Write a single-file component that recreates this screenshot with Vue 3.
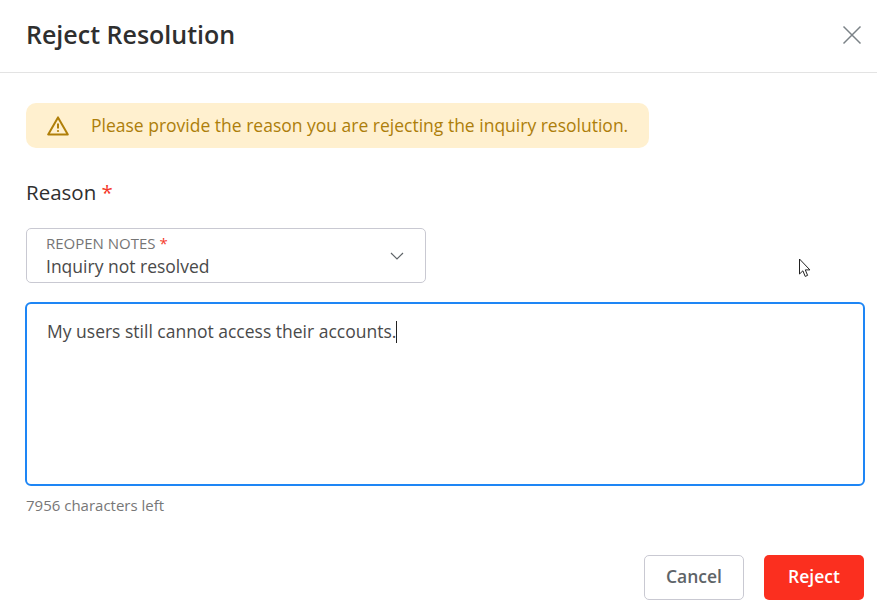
<script setup>
const remaining = 7956
</script>

<template>
  <div class="dialog">
    <header class="head">
      <h1 class="title">Reject Resolution</h1>
      <svg class="close" width="20" height="20" viewBox="0 0 20 20" fill="none" stroke="#7b8287" stroke-width="1.5">
        <path d="M1.5 1.5 18.5 18.5M18.5 1.5 1.5 18.5" />
      </svg>
    </header>
    <main class="body">
      <div class="alert">
        <svg class="warn" width="22" height="20" viewBox="0 0 22 20" fill="none" stroke="#b07f09" stroke-width="2" stroke-linejoin="round">
          <path d="M11 1.4 1.2 18.4h19.6z" />
          <path d="M11 7.5v5" stroke-width="2" />
          <circle cx="11" cy="15" r="1.1" fill="#b07f09" stroke="none" />
        </svg>
        <span class="alert-text">Please provide the reason you are rejecting the inquiry resolution.</span>
      </div>
      <div class="label">Reason <span class="req">*</span></div>
      <div class="select">
        <div class="select-text">
          <div class="select-label">REOPEN NOTES <span class="req">*</span></div>
          <div class="select-value">Inquiry not resolved</div>
        </div>
        <svg class="chev" width="14" height="8" viewBox="0 0 14 8" fill="none" stroke="#5f6468" stroke-width="1.2">
          <path d="M1 1l6 6 6-6" />
        </svg>
      </div>
      <div class="area">
        <span>My users still cannot access their accounts.</span><span class="caret"></span>
      </div>
      <div class="count">{{ remaining }} characters left</div>
      <footer class="actions">
        <button class="btn cancel">Cancel</button>
        <button class="btn reject">Reject</button>
      </footer>
    </main>
    <svg class="pointer" width="13" height="20" viewBox="0 0 13 20">
      <path d="M1.5 1v15l3.4-3.2 2.3 5.6 2.4-1-2.3-5.5h4.6z" fill="#fff" stroke="#222" stroke-width="1" />
    </svg>
  </div>
</template>

<style>
html, body { margin: 0; background: #fff; }
</style>

<style scoped>
.dialog {
  position: relative;
  width: 877px;
  height: 613px;
  overflow: hidden;
  background: #fff;
  font-family: "Open Sans", sans-serif;
  color: #333;
}
.head {
  box-sizing: border-box;
  height: 73px;
  border-bottom: 1px solid #e3e3e3;
  padding: 0 15px 3px 26px;
  display: flex;
  align-items: center;
  justify-content: space-between;
}
.title {
  margin: 0 0 2px;
  font-size: 25px;
  font-weight: 600;
  line-height: 32px;
  color: #2f2f2f;
}
.body {
  padding: 30px 13px 0 26px;
}
.alert {
  box-sizing: border-box;
  width: 623px;
  height: 45px;
  background: #fff0cf;
  border-radius: 10px;
  display: flex;
  align-items: center;
  padding: 0 0 0 21px;
  gap: 22px;
  color: #ad7e0a;
  font-size: 17.5px;
}
.alert-text {
  margin-bottom: 2px;
}
.label {
  margin-top: 28px;
  font-size: 20.5px;
  font-weight: 500;
  line-height: 32px;
  color: #2f2f2f;
}
.req { color: #f5392b; }
.select {
  box-sizing: border-box;
  margin-top: 20px;
  width: 400px;
  height: 55px;
  border: 1px solid #c9c9d2;
  border-radius: 5px;
  display: flex;
  align-items: center;
  justify-content: space-between;
  padding: 0 21px 0 19px;
}
.select-text {
  padding-top: 2px;
}
.select-label {
  font-size: 15px;
  line-height: 18px;
  color: #757575;
}
.select-value {
  margin-top: 2px;
  font-size: 17.5px;
  line-height: 25px;
  color: #4a4a4a;
}
.area {
  box-sizing: border-box;
  margin: 19px 0 0 -1px;
  width: 840px;
  height: 184px;
  border: 2px solid #1e86f5;
  border-radius: 6px;
  padding: 14px 20px;
  font-size: 17.5px;
  line-height: 26px;
  color: #4a4a4a;
  display: flex;
  align-items: flex-start;
}
.caret {
  display: inline-block;
  width: 1px;
  height: 22px;
  margin: 3px 0 0 0;
  background: #222;
}
.count {
  margin-top: 9px;
  font-size: 15px;
  line-height: 21px;
  color: #777;
}
.actions {
  margin-top: 39px;
  display: flex;
  justify-content: flex-end;
  gap: 20px;
}
.btn {
  box-sizing: border-box;
  width: 100px;
  height: 45px;
  border-radius: 5px;
  font-family: inherit;
  font-size: 17.5px;
  font-weight: 600;
  padding: 0 0 3px;
}
.cancel {
  background: #fff;
  border: 1px solid #c9c9d2;
  color: #5e6468;
}
.reject {
  background: #fb2f1f;
  border: 0;
  color: #fff;
}
.pointer {
  position: absolute;
  left: 798px;
  top: 258px;
}
</style>
